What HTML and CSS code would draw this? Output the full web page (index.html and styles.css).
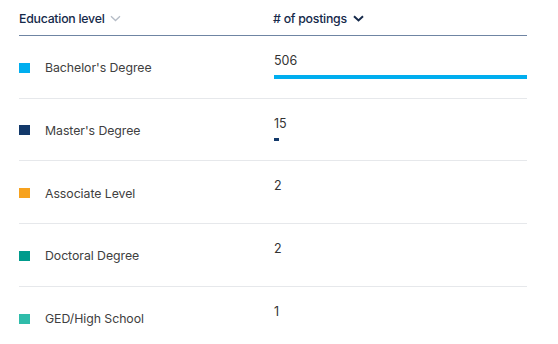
FILE: index.html
```html
<!DOCTYPE html>
<html>
<head>
<meta charset="utf-8">
<link rel="stylesheet" href="styles.css">
</head>
<body>
<div class="table">
  <div class="head">
    <div class="hcell col-label">Education level
      <svg class="chev chev-muted" width="11" height="7" viewBox="0 0 11 7"><path d="M1 1.3 L5.5 5.5 L10 1.3" fill="none" stroke="currentColor" stroke-width="1.3"/></svg>
    </div>
    <div class="hcell col-num">#&nbsp;of postings
      <svg class="chev chev-dark" width="11" height="7" viewBox="0 0 11 7"><path d="M1 1.2 L5.5 5.4 L10 1.2" fill="none" stroke="currentColor" stroke-width="2"/></svg>
    </div>
  </div>
  <div class="row">
    <div class="col-label cell-label"><span class="sw sw-bach"></span>Bachelor's Degree</div>
    <div class="col-num cell-num"><div class="num">506</div><div class="bar bar-bach" style="width:100%"></div></div>
  </div>
  <div class="row">
    <div class="col-label cell-label"><span class="sw sw-mast"></span>Master's Degree</div>
    <div class="col-num cell-num"><div class="num">15</div><div class="bar bar-mast" style="width:5px"></div></div>
  </div>
  <div class="row">
    <div class="col-label cell-label"><span class="sw sw-assoc"></span>Associate Level</div>
    <div class="col-num cell-num"><div class="num">2</div></div>
  </div>
  <div class="row">
    <div class="col-label cell-label"><span class="sw sw-doc"></span>Doctoral Degree</div>
    <div class="col-num cell-num"><div class="num">2</div></div>
  </div>
  <div class="row">
    <div class="col-label cell-label"><span class="sw sw-ged"></span>GED/High School</div>
    <div class="col-num cell-num"><div class="num">1</div></div>
  </div>
</div>
</body>
</html>
```

FILE: styles.css
```css
html, body {
  margin: 0;
  padding: 0;
  background: #ffffff;
}
body {
  font-family: "Inter", "Liberation Sans", sans-serif;
  padding: 0 31px 0 19px;
}
.table {
  width: 508px;
}
.head {
  display: flex;
  height: 35px;
  border-bottom: 1px solid #6f85a3;
  box-sizing: content-box;
}
.hcell {
  display: flex;
  align-items: center;
  gap: 5px;
  font-size: 12.3px;
  font-weight: 500;
  color: #15294a;
  letter-spacing: -0.25px;
  padding-top: 2px;
}
.col-label {
  width: 254px;
  flex: none;
}
.col-num {
  flex: 1;
  min-width: 0;
}
.chev-muted { color: #b5bcc6; }
.chev-dark { color: #15294a; margin-left: 1px; margin-top: -1px; }
.row {
  display: flex;
  height: 62.67px;
  box-sizing: border-box;
  border-bottom: 1px solid #e6e8eb;
}
.row:last-child { border-bottom: none; }
.cell-label {
  display: flex;
  align-items: center;
  padding-top: 2px;
  font-size: 12.3px;
  color: #404040;
  letter-spacing: -0.05px;
}
.sw {
  width: 11px;
  height: 10px;
  margin-right: 15px;
  flex: none;
}
.sw-bach { background: #00aeef; }
.sw-mast { background: #13396a; }
.sw-assoc { background: #f7a21e; }
.sw-doc { background: #009b8c; }
.sw-ged { background: #2fbcaa; }
.cell-num {
  padding-top: 17px;
  padding-left: 1px;
}
.num {
  font-size: 12.5px;
  color: #333333;
  line-height: 16px;
}
.bar {
  height: 4px;
  margin-top: 6px;
}
.bar-bach { background: #00aeef; }
.bar-mast { background: #13396a; height: 3.5px; }
```
